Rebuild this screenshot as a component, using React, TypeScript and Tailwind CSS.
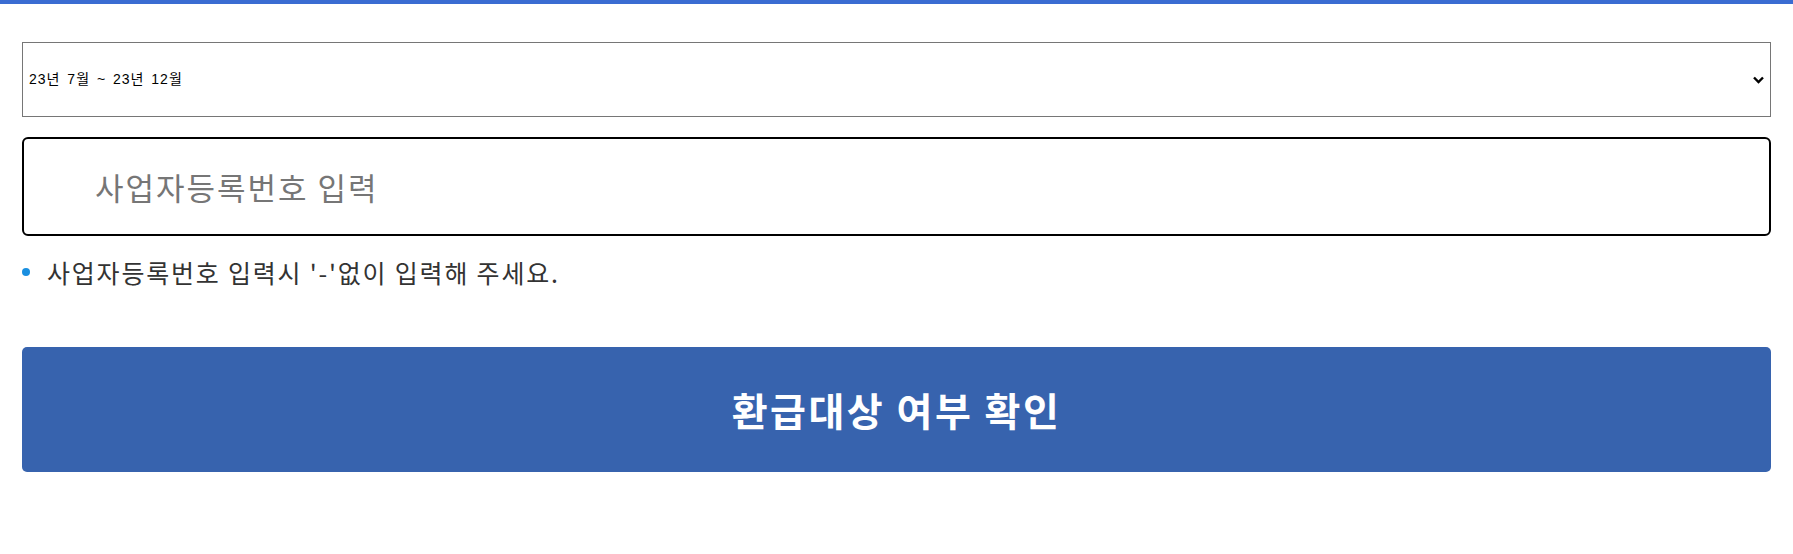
export default function App() {
  return (
    <div className="min-h-screen bg-white font-['Noto_Sans_CJK_KR',sans-serif]">
      <div className="h-[4px] bg-[#3a6cd2]" />
      <div className="mx-[22px] mt-[38px] flex flex-col">
        <div className="relative">
          <select
            className="block h-[75px] w-full appearance-none border border-[#767676] bg-white pl-[6px] text-[14px] tracking-[1px] text-black outline-none [word-spacing:2px] font-['Liberation_Sans','Noto_Sans_CJK_KR',sans-serif]"
            defaultValue="2023-2"
          >
            <option value="2023-2">23년 7월 ~ 23년 12월</option>
          </select>
          <svg
            className="pointer-events-none absolute right-[7px] top-1/2 -translate-y-1/2"
            width="11"
            height="8"
            viewBox="0 0 11 8"
          >
            <polyline points="1,1.5 5.5,6 10,1.5" fill="none" stroke="#000" strokeWidth="2.4" />
          </svg>
        </div>

        <input
          autoFocus
          type="text"
          placeholder="사업자등록번호 입력"
          className="mt-[20px] h-[99px] w-full rounded-[6px] border-2 border-black pl-[71px] text-[31px] tracking-[2px] text-black outline-none placeholder:text-[#767676]"
        />

        <div className="mt-[18px] flex items-center gap-[17px]">
          <span className="h-[8px] w-[8px] rounded-full bg-[#1a8fe0]" />
          <p className="text-[25px] leading-[36px] tracking-[1.8px] text-[#333]">
            사업자등록번호 입력시 '-'없이 입력해 주세요.
          </p>
        </div>

        <button
          type="button"
          className="mt-[57px] h-[125px] w-full rounded-[5px] bg-[#3763ae] text-[39px] font-bold tracking-[2.5px] text-white"
        >
          환급대상 여부 확인
        </button>
      </div>
    </div>
  );
}
